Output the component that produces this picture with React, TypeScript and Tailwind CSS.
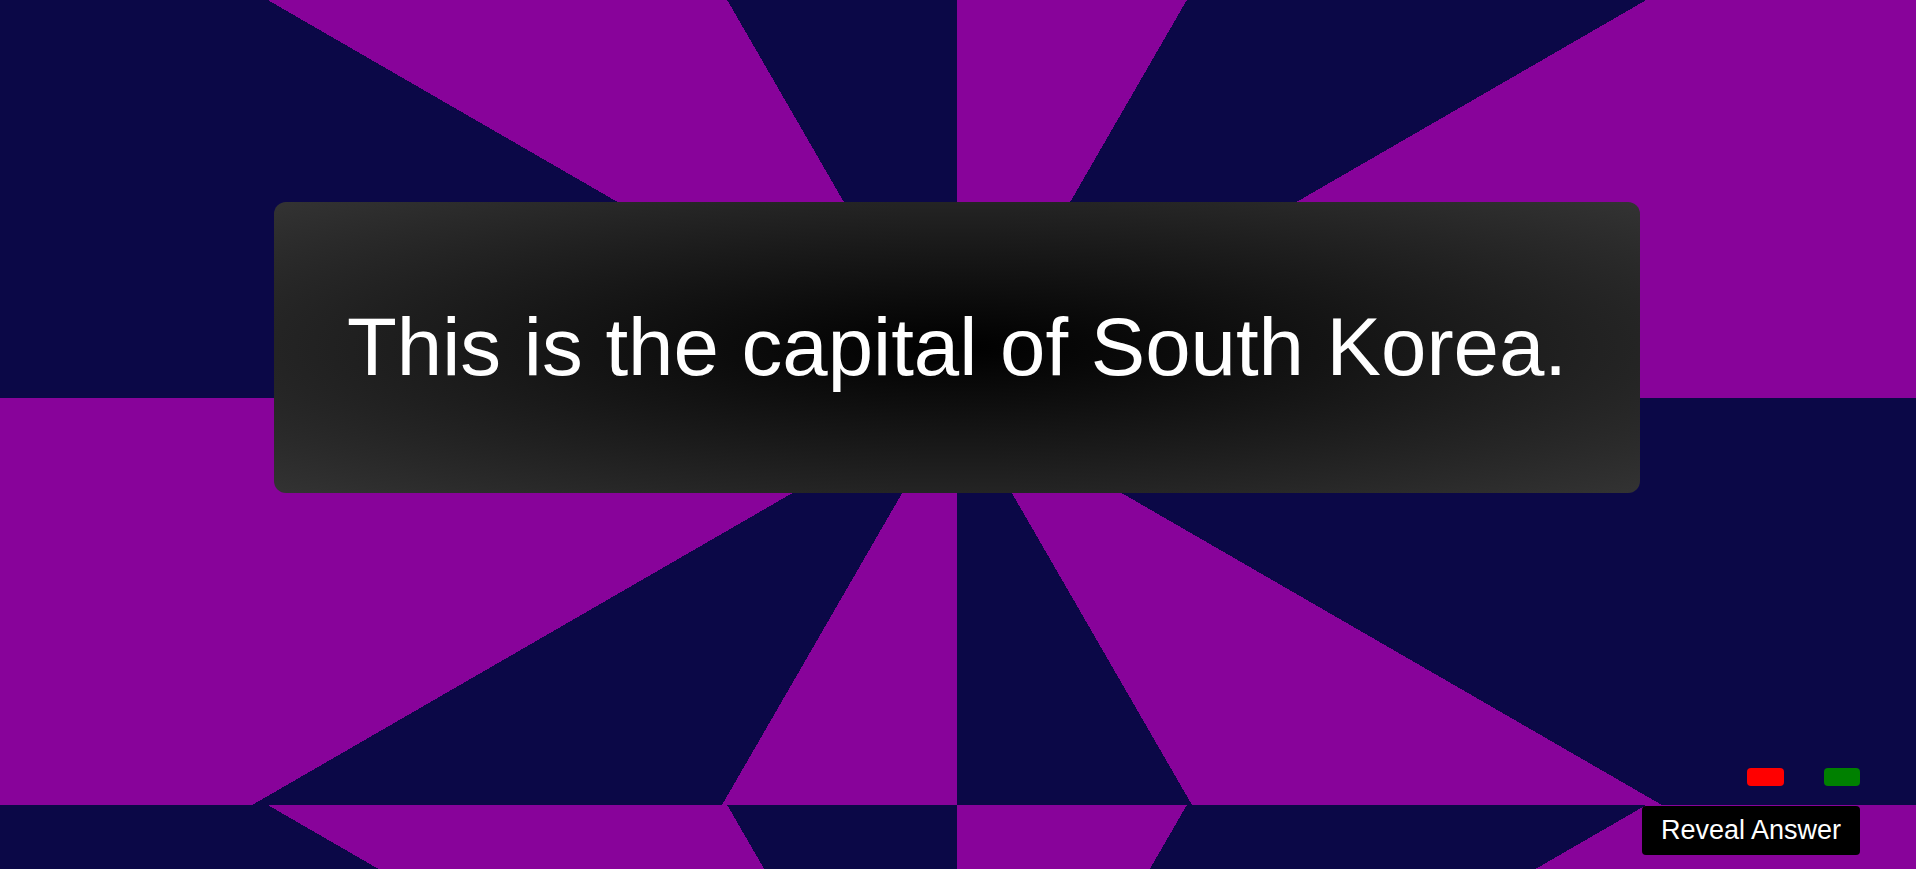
import React from "react";

export default function App() {
  return (
    <div
      className="flex h-screen w-full flex-col bg-[#0b0847] bg-[repeating-conic-gradient(from_0deg_at_957px_398px,#88039a_0deg_30deg,#0b0847_30deg_60deg)] bg-[length:100%_805px] bg-repeat"
      style={{ fontFamily: '"Liberation Sans", Arial, sans-serif' }}
    >
      <div className="mx-auto mt-[202px] flex h-[291px] w-[1366px] -translate-x-px items-center justify-center rounded-[12px] bg-[radial-gradient(ellipse_at_center,#000_0%,#333_100%)]">
        <h1 className="whitespace-nowrap text-[81.6px] font-normal leading-normal text-white">
          This is the capital of South Korea.
        </h1>
      </div>
      <div className="mt-auto flex flex-col items-end gap-[20px] pb-[14px] pr-[56px]">
        <div className="flex gap-[40px]">
          <button className="h-[18px] w-[37px] rounded-[4px] bg-[#ff0000]" aria-label="wrong" />
          <button className="h-[18px] w-[36px] rounded-[4px] bg-[#008000]" aria-label="right" />
        </div>
        <button className="flex h-[49px] w-[218px] items-center justify-center rounded-[4px] bg-black text-[27px] leading-none text-white">
          Reveal Answer
        </button>
      </div>
    </div>
  );
}
